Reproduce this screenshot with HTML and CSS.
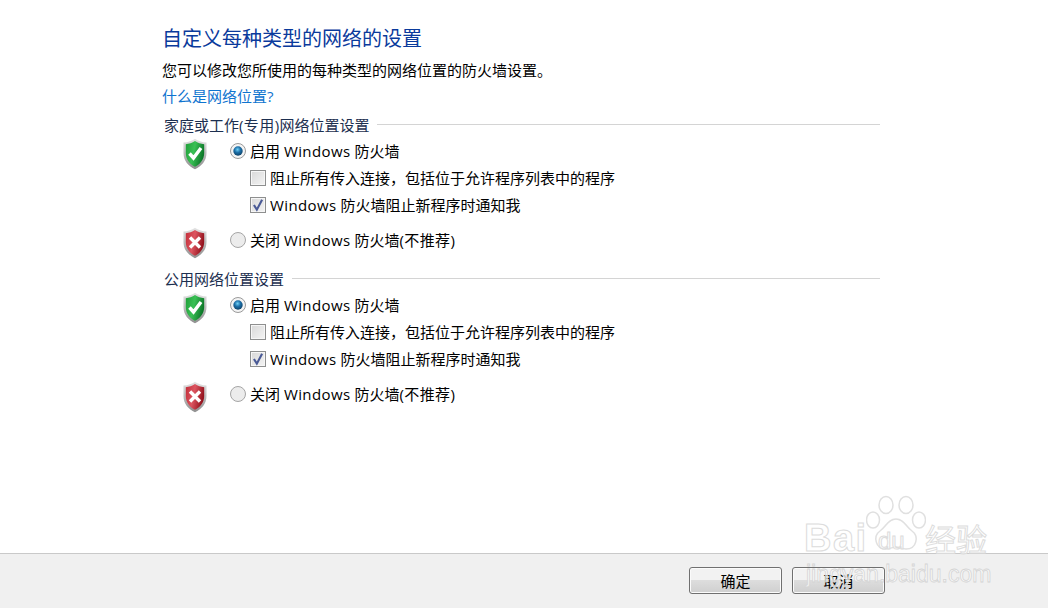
FILE: index.html
```html
<!DOCTYPE html>
<html lang="zh">
<head>
<meta charset="utf-8">
<title>自定义设置</title>
<link rel="stylesheet" href="styles.css">
</head>
<body>
<svg class="defs" width="0" height="0" aria-hidden="true">
  <defs>
    <linearGradient id="rim" x1="0" y1="0" x2="0" y2="1"><stop offset="0" stop-color="#e4e4e4"/><stop offset="1" stop-color="#8f8f8f"/></linearGradient>
    <linearGradient id="green" x1="0" y1="0" x2="1" y2="0.3"><stop offset="0" stop-color="#1f9e38"/><stop offset="0.5" stop-color="#3ac055"/><stop offset="1" stop-color="#0e7a2a"/></linearGradient>
    <linearGradient id="red" x1="0" y1="0" x2="1" y2="0.3"><stop offset="0" stop-color="#c22c38"/><stop offset="0.5" stop-color="#dc5560"/><stop offset="1" stop-color="#96141f"/></linearGradient>
    <radialGradient id="dot" cx="0.45" cy="0.35" r="0.7"><stop offset="0" stop-color="#6fd0f5"/><stop offset="0.45" stop-color="#1c6fa8"/><stop offset="1" stop-color="#0b3a5e"/></radialGradient>
  </defs>
</svg>
<div class="page">
  <main class="main">
    <h1 class="title">自定义每种类型的网络的设置</h1>
    <p class="intro">您可以修改您所使用的每种类型的网络位置的防火墙设置。</p>
    <a class="link" href="#">什么是网络位置?</a>

    <section class="group first">
      <div class="legend"><span>家庭或工作<span class="paren">(专用)</span>网络位置设置</span><i class="rule"></i></div>
      <div class="row on">
        <svg class="shield" viewBox="0 0 26 32"><path d="M13 .8C10 3 6 4.300 1.500 4.600V15c0 8 5 13 11.500 16.200C19.500 28 24.500 23 24.500 15V4.600C20 4.300 16 3 13 .8Z" fill="url(#rim)"/><path d="M13 3C10.300 4.800 7 5.900 3.800 6.300V15c0 6.500 4 11 9.200 13.800C18.200 26 22.200 21.500 22.200 15V6.300C19 5.900 15.700 4.800 13 3Z" fill="url(#green)"/><path d="M7.500 15.500l4 4.500 7.500-10" fill="none" stroke="#fff" stroke-width="3.400"/></svg>
        <span class="radio checked"><svg viewBox="0 0 16 16"><circle cx="8" cy="8" r="7.500" fill="#f4f4f4" stroke="#9a9a9a"/><circle cx="8" cy="8" r="4.700" fill="url(#dot)"/></svg></span>
        <label class="label">启用 <span class="win">Windows</span> 防火墙</label>
      </div>
      <div class="row sub"><span class="check"></span><label class="label">阻止所有传入连接，包括位于允许程序列表中的程序</label></div>
      <div class="row sub"><span class="check"><svg viewBox="0 0 12 12"><path d="M2.500 6l2.500 4 4.500-8.500" fill="none" stroke="#4a5a96" stroke-width="1.800"/></svg></span><label class="label"><span class="win">Windows</span> 防火墙阻止新程序时通知我</label></div>
      <div class="row off">
        <svg class="shield" viewBox="0 0 26 32"><path d="M13 .8C10 3 6 4.300 1.500 4.600V15c0 8 5 13 11.500 16.200C19.500 28 24.500 23 24.500 15V4.600C20 4.300 16 3 13 .8Z" fill="url(#rim)"/><path d="M13 3C10.300 4.800 7 5.900 3.800 6.300V15c0 6.500 4 11 9.200 13.800C18.200 26 22.200 21.500 22.200 15V6.300C19 5.900 15.700 4.800 13 3Z" fill="url(#red)"/><path d="M8 10.500l10 10M18 10.500l-10 10" fill="none" stroke="#fff" stroke-width="3.400"/></svg>
        <span class="radio"><svg viewBox="0 0 16 16"><circle cx="8" cy="8" r="7.500" fill="#ececec" stroke="#a5a5a5"/></svg></span>
        <label class="label">关闭 <span class="win">Windows</span> 防火墙<span class="paren">(不推荐)</span></label>
      </div>
    </section>

    <section class="group">
      <div class="legend"><span>公用网络位置设置</span><i class="rule"></i></div>
      <div class="row on">
        <svg class="shield" viewBox="0 0 26 32"><path d="M13 .8C10 3 6 4.300 1.500 4.600V15c0 8 5 13 11.500 16.200C19.500 28 24.500 23 24.500 15V4.600C20 4.300 16 3 13 .8Z" fill="url(#rim)"/><path d="M13 3C10.300 4.800 7 5.900 3.800 6.300V15c0 6.500 4 11 9.200 13.800C18.200 26 22.200 21.500 22.200 15V6.300C19 5.900 15.700 4.800 13 3Z" fill="url(#green)"/><path d="M7.500 15.500l4 4.500 7.500-10" fill="none" stroke="#fff" stroke-width="3.400"/></svg>
        <span class="radio checked"><svg viewBox="0 0 16 16"><circle cx="8" cy="8" r="7.500" fill="#f4f4f4" stroke="#9a9a9a"/><circle cx="8" cy="8" r="4.700" fill="url(#dot)"/></svg></span>
        <label class="label">启用 <span class="win">Windows</span> 防火墙</label>
      </div>
      <div class="row sub"><span class="check"></span><label class="label">阻止所有传入连接，包括位于允许程序列表中的程序</label></div>
      <div class="row sub"><span class="check"><svg viewBox="0 0 12 12"><path d="M2.500 6l2.500 4 4.500-8.500" fill="none" stroke="#4a5a96" stroke-width="1.800"/></svg></span><label class="label"><span class="win">Windows</span> 防火墙阻止新程序时通知我</label></div>
      <div class="row off">
        <svg class="shield" viewBox="0 0 26 32"><path d="M13 .8C10 3 6 4.300 1.500 4.600V15c0 8 5 13 11.500 16.200C19.500 28 24.500 23 24.500 15V4.600C20 4.300 16 3 13 .8Z" fill="url(#rim)"/><path d="M13 3C10.300 4.800 7 5.900 3.800 6.300V15c0 6.500 4 11 9.200 13.800C18.200 26 22.200 21.500 22.200 15V6.300C19 5.900 15.700 4.800 13 3Z" fill="url(#red)"/><path d="M8 10.500l10 10M18 10.500l-10 10" fill="none" stroke="#fff" stroke-width="3.400"/></svg>
        <span class="radio"><svg viewBox="0 0 16 16"><circle cx="8" cy="8" r="7.500" fill="#ececec" stroke="#a5a5a5"/></svg></span>
        <label class="label">关闭 <span class="win">Windows</span> 防火墙<span class="paren">(不推荐)</span></label>
      </div>
    </section>
  </main>
  <footer class="footer">
    <button class="btn">确定</button>
    <button class="btn">取消</button>
  </footer>
</div>
<div class="mark">
  <svg class="paw" viewBox="0 0 60 60"><g fill="none" stroke="#e0e0e0" stroke-width="1.500"><ellipse cx="20" cy="10" rx="7" ry="8.500"/><ellipse cx="40" cy="10" rx="7" ry="8.500"/><ellipse cx="7" cy="25" rx="6.500" ry="8"/><ellipse cx="53" cy="25" rx="6.500" ry="8"/><path d="M30 24c-8 0-10 8-16 12-7 5-5 18 6 18 5 0 6-2 10-2s5 2 10 2c11 0 13-13 6-18-6-4-8-12-16-12Z"/></g></svg>
  <span class="mark-a">Bai</span><span class="mark-b">du</span><span class="mark-c">经验</span>
  <span class="mark-url">jingyan.baidu.com</span>
</div>
</body>
</html>
```
FILE: styles.css
```css
html, body { margin: 0; padding: 0; height: 100%; background: #fff; overflow: hidden; }
body { position: relative; font-family: "Open Sans", "Noto Sans CJK SC", sans-serif; color: #000; }
.defs { position: absolute; }
.page { display: flex; flex-direction: column; height: 608px; }
.main { flex: 1; padding: 25px 168px 0 163px; }
.title { margin: 0 0 0 -1px; font-size: 20px; line-height: 28px; font-weight: 400; color: #0a3a9c; }
.intro { margin: 7px 0 0 -1px; font-size: 15px; line-height: 20px; color: #000; }
.link { display: block; margin: 6px 0 0 -1px; font-size: 15px; line-height: 20px; color: #0f74cf; text-decoration: none; }
.group { margin-top: 15px; }
.group.first { margin-top: 8px; }
.legend { display: flex; align-items: center; gap: 8px; height: 20px; padding-left: 1px; font-size: 15px; color: #1c2f50; }
.rule { flex: 1; height: 1px; background: #d4d4d4; }
.paren { letter-spacing: .4px; }
.win { letter-spacing: .4px; }
.row { display: flex; align-items: center; font-size: 15px; }
.row.on { height: 27px; margin-top: 3px; padding-left: 19px; }
.row.sub { height: 27px; padding-left: 87px; }
.row.off { height: 27px; margin-top: 8px; padding-left: 19px; }
.shield { width: 26px; height: 32px; flex: none; margin-top: 7px; }
.radio { width: 16px; height: 16px; margin-left: 22px; margin-right: 4px; flex: none; display: block; }
.radio svg { display: block; width: 16px; height: 16px; }
.check { width: 14px; height: 14px; margin-right: 4px; flex: none; border: 1px solid #8e8f8f; background: linear-gradient(135deg, #d8d8d8, #f4f4f4); box-shadow: inset 0 0 0 1px #f6f6f6; }
.check svg { display: block; width: 14px; height: 14px; }
.label { line-height: 20px; white-space: nowrap; }
.footer { height: 52px; flex: none; display: flex; gap: 10px; justify-content: flex-end; align-items: center; padding: 0 163px 2px 0; background: #f0f0f0; border-top: 1px solid #c9c9c9; }
.btn { width: 93px; height: 27px; padding: 0; border: 1px solid #707070; border-radius: 3px; background: linear-gradient(#f2f2f2 0 50%, #dddddd 50%, #cfcfcf 100%); box-shadow: inset 0 0 0 1px #fbfbfb; font: 15px "Noto Sans CJK SC", sans-serif; color: #000; }
.mark { position: absolute; left: 0; top: 0; width: 1048px; height: 608px; pointer-events: none; }
.paw { position: absolute; left: 866px; top: 495px; width: 60px; height: 60px; }
.mark-a, .mark-b, .mark-c, .mark-url { position: absolute; color: rgba(255,255,255,.7); -webkit-text-stroke: 1px #dcdcdc; font-family: "Liberation Sans", sans-serif; white-space: nowrap; }
.mark-a { left: 804px; top: 518px; font-size: 38px; line-height: 40px; font-weight: 700; letter-spacing: 1.500px; }
.mark-b { left: 878px; top: 529px; font-size: 24px; line-height: 24px; }
.mark-c { left: 925px; top: 520px; font-size: 31px; line-height: 36px; font-family: "Noto Sans CJK SC", sans-serif; }
.mark-url { left: 806px; top: 562px; font-size: 23px; line-height: 24px; -webkit-text-stroke: .8px #d4d4d4; }
```
